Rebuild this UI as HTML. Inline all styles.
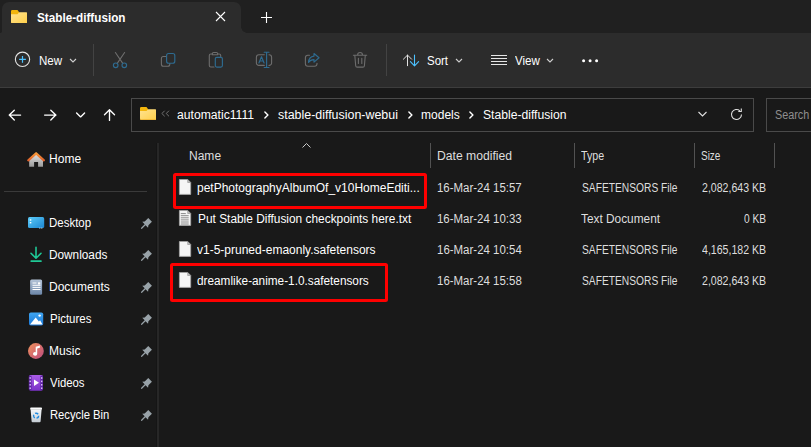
<!DOCTYPE html>
<html>
<head>
<meta charset="utf-8">
<title>Stable-diffusion</title>
<style>
*{box-sizing:border-box;margin:0;padding:0}
html,body{width:811px;height:447px;overflow:hidden;background:#191919}
body{font-family:"Liberation Sans",sans-serif;font-size:12px;color:#fff;position:relative}
.abs{position:absolute}
.t{position:absolute;white-space:nowrap;line-height:16px;height:16px;color:#fff;font-size:12px;transform-origin:0 50%}
#titlebar{left:0;top:0;width:811px;height:33px;background:#202020}
#tab{left:2px;top:2px;width:239px;height:31px;background:#2c2c2c;border-radius:7px 7px 0 0}
#tabcurveL{left:-6px;top:25px;width:8px;height:8px;background:radial-gradient(circle at 0 0,transparent 7.5px,#2c2c2c 8px)}
#tabcurveR{left:241px;top:27px;width:6px;height:6px;background:radial-gradient(circle at 100% 0,#202020 5.5px,#2c2c2c 6px)}
#toolbar{left:0;top:33px;width:811px;height:55px;background:#2c2c2c;border-bottom:1px solid #3d3d3d}
.vsep{position:absolute;width:1px;background:#434343}
#addr{left:131px;top:98px;width:623px;height:34px;border:1px solid #4a4a4a;background:#191919}
#search{left:766px;top:98px;width:60px;height:34px;border:1px solid #4a4a4a;background:#191919}
.colsep{position:absolute;top:143px;width:1px;height:25px;background:#525252}
.red{position:absolute;border:3.300px solid #fe0000;border-radius:2.500px}
.dim{color:#dedede}
/*FIT*/
#tabtitle{left:37.07px !important;right:auto !important;transform:scaleX(0.9759)}
#tnew{left:39.02px !important;right:auto !important;transform:scaleX(0.9620)}
#tsort{left:427.00px !important;right:auto !important;transform:scaleX(0.9564)}
#tview{left:515.00px !important;right:auto !important;transform:scaleX(0.9639)}
#bc1{left:176.99px !important;right:auto !important;transform:scaleX(1.0135)}
#bc2{left:278.00px !important;right:auto !important;transform:scaleX(1.0349)}
#bc3{left:420.98px !important;right:auto !important;transform:scaleX(1.0014)}
#bc4{left:483.01px !important;right:auto !important;transform:scaleX(1.0126)}
#sHome{left:48.95px !important;right:auto !important;transform:scaleX(1.0023)}
#s1{left:48.96px !important;right:auto !important;transform:scaleX(0.9558)}
#s2{left:49.00px !important;right:auto !important;transform:scaleX(0.9837)}
#s3{left:49.00px !important;right:auto !important;transform:scaleX(1.0007)}
#s4{left:50.00px !important;right:auto !important;transform:scaleX(0.9549)}
#s5{left:49.02px !important;right:auto !important;transform:scaleX(1.0021)}
#s6{left:49.99px !important;right:auto !important;transform:scaleX(0.9472)}
#s7{left:49.99px !important;right:auto !important;transform:scaleX(0.9371)}
#hName{left:188.99px !important;right:auto !important;transform:scaleX(1.0019)}
#hDate{left:436.96px !important;right:auto !important;transform:scaleX(1.0143)}
#hType{left:581.04px !important;right:auto !important;transform:scaleX(0.8886)}
#hSize{left:701.00px !important;right:auto !important;transform:scaleX(0.8306)}
#r1n{left:197.00px !important;right:auto !important;transform:scaleX(1.0000)}
#r2n{left:198.00px !important;right:auto !important;transform:scaleX(0.9908)}
#r3n{left:197.00px !important;right:auto !important;transform:scaleX(1.0001)}
#r4n{left:196.99px !important;right:auto !important;transform:scaleX(0.9829)}
#r1d{left:437.00px !important;right:auto !important;transform:scaleX(0.9552)}
#r2d{left:437.00px !important;right:auto !important;transform:scaleX(0.9552)}
#r3d{left:437.00px !important;right:auto !important;transform:scaleX(0.9553)}
#r4d{left:437.01px !important;right:auto !important;transform:scaleX(0.9553)}
#r1t{left:581.98px !important;right:auto !important;transform:scaleX(0.8530)}
#r2t{left:581.01px !important;right:auto !important;transform:scaleX(0.9879)}
#r3t{left:581.98px !important;right:auto !important;transform:scaleX(0.8530)}
#r4t{left:581.98px !important;right:auto !important;transform:scaleX(0.8530)}
#r1s{left:701.95px !important;right:auto !important;transform:scaleX(0.8810)}
#r2s{left:743.95px !important;right:auto !important;transform:scaleX(0.8489)}
#r3s{left:701.95px !important;right:auto !important;transform:scaleX(0.8810)}
#r4s{left:701.95px !important;right:auto !important;transform:scaleX(0.8810)}
/*ENDFIT*/
</style>
</head>
<body>
<!-- title bar -->
<div id="titlebar" class="abs"></div>
<div id="tab" class="abs"></div>
<div id="tabcurveR" class="abs"></div>
<div class="abs" style="left:0;top:30.500px;width:2px;height:2.500px;background:radial-gradient(circle at 0 0,#202020 1.900px,#2c2c2c 2.400px)"></div>
<div id="toolbar" class="abs"></div>

<!-- tab folder icon -->
<svg class="abs" style="left:10.8px;top:9.700px" width="16.400" height="13.600" viewBox="0 0 16.400 13.600">
  <defs><linearGradient id="fg" x1="0" y1="0" x2="1" y2="1"><stop offset="0" stop-color="#ffe391"/><stop offset="1" stop-color="#ffcf48"/></linearGradient></defs>
  <path d="M1.300 0h5.200l1.500 2h-8v-0.700a1.300 1.300 0 0 1 1.300-1.300z M0 2h8v3h-8z" fill="#f2b50c"/>
  <path d="M0 4.200h6.500l1.700-1.900h6.900a1.300 1.300 0 0 1 1.300 1.300v8.700a1.300 1.300 0 0 1-1.300 1.300h-13.800a1.300 1.300 0 0 1-1.300-1.300z" fill="url(#fg)"/>
  <path d="M0 12.300a1.300 1.300 0 0 0 1.300 1.300h13.800a1.300 1.300 0 0 0 1.300-1.300v-0.600a1.300 1.300 0 0 1-1.300 1.300h-13.800a1.300 1.300 0 0 1-1.300-1.300z" fill="#eeb232"/>
</svg>
<div class="t" id="tabtitle" style="left:37px;top:10px;font-weight:bold">Stable-diffusion</div>
<!-- close X -->
<svg class="abs" style="left:215px;top:11px" width="11" height="11" viewBox="0 0 11 11"><path d="M1 1l9 9M10 1l-9 9" stroke="#fff" stroke-width="1.1" fill="none"/></svg>
<!-- plus -->
<svg class="abs" style="left:261px;top:12px" width="11" height="11" viewBox="0 0 11 11"><path d="M5.5 0v11M0 5.5h11" stroke="#fff" stroke-width="1.1" fill="none"/></svg>

<!-- toolbar: New -->
<svg class="abs" style="left:14px;top:51px" width="17" height="17" viewBox="0 0 17 17">
  <circle cx="8.5" cy="8.3" r="7.15" stroke="#e4e4e4" stroke-width="1.1" fill="none"/>
  <path d="M8.5 4.9v6.800M5.100 8.3h6.800" stroke="#4cc2ff" stroke-width="1.2" fill="none"/>
</svg>
<div class="t" id="tnew" style="left:39px;top:53px;font-size:12px">New</div>
<svg class="abs" style="left:69px;top:58px" width="8" height="5" viewBox="0 0 8 5"><path d="M1 1l3 3 3-3" stroke="#cfcfcf" stroke-width="1.1" fill="none"/></svg>
<div class="vsep" style="left:93px;top:44px;height:32px"></div>

<!-- toolbar icons in page coordinates -->
<svg class="abs" style="left:0;top:0" width="811" height="100" viewBox="0 0 811 100" fill="none" stroke-linecap="round" stroke-linejoin="round">
  <g stroke="#6d6d6d" stroke-width="1.1">
    <!-- scissors blades -->
    <path d="M115.400 52.500l7.200 10.600M124.600 52.500l-7.200 10.600"/>
    <!-- copy back -->
    <path d="M166 56.500h-2.600a2 2 0 0 0-2 2v5.800a2 2 0 0 0 2 2h4.400a2 2 0 0 0 2-2v-0.800"/>
    <!-- paste clipboard -->
    <path d="M212.300 54h-1.500a1.500 1.500 0 0 0-1.500 1.500v10a1.500 1.500 0 0 0 1.500 1.500h3.200M217.700 54h1.500a1.500 1.500 0 0 1 1.500 1.500v1.200"/>
    <path d="M212.300 54.800v-1a1.300 1.300 0 0 1 1.300-1.300h2.800a1.300 1.300 0 0 1 1.300 1.300v1z"/>
    <!-- rename box -->
    <path d="M264.300 54.800h-5.400a2.500 2.500 0 0 0-2.500 2.500v5.600a2.500 2.500 0 0 0 2.500 2.500h5.400M269 54.800h0.100a2.500 2.500 0 0 1 2.500 2.500v5.600a2.500 2.500 0 0 1-2.500 2.500h-0.100"/>
    <!-- share box -->
    <path d="M309.500 55.200h-1.600a2.500 2.500 0 0 0-2.500 2.500v6.100a2.500 2.500 0 0 0 2.500 2.500h6.600a2.500 2.500 0 0 0 2.500-2.500v-0.600"/>
    <!-- trash -->
    <path d="M353.400 55.200h13.300M357.600 55a2.450 2.450 0 0 1 4.900 0M354.800 55.300l0.900 10.400a1.500 1.500 0 0 0 1.500 1.400h5.700a1.500 1.500 0 0 0 1.500-1.400l0.900-10.400M358.400 58.300v5.200M361.800 58.300v5.200"/>
  </g>
  <g stroke="#2e6b90" stroke-width="1.15">
    <circle cx="115.700" cy="65.300" r="2.300"/><circle cx="124.300" cy="65.300" r="2.300"/>
    <rect x="166.600" y="53.500" width="8.200" height="9.700" rx="2"/>
    <rect x="215.300" y="57.300" width="7.100" height="9.800" rx="1.500"/>
    <path d="M264.200 52.200h4.800M264.200 67.500h4.800M266.600 52.200v15.300"/>
    <path d="M258.900 63l2.600-6.300 2.600 6.300M259.800 61h3.400"/>
    <path d="M314 53.500l5 4.300-5 4.300v-2.500c-2.700 0-4.300 0.800-5.500 2.800 0.200-3.300 2.100-5.900 5.500-6.300z"/>
  </g>
</svg>
<div class="vsep" style="left:386px;top:44px;height:32px"></div>

<!-- sort -->
<svg class="abs" style="left:0;top:0" width="811" height="100" viewBox="0 0 811 100" fill="none" stroke-linecap="round" stroke-linejoin="round">
  <path d="M407.500 65.700v-10.600M403.400 59.200l4.100-4.100 4.100 4.100" stroke="#e2e2e2" stroke-width="1"/>
  <path d="M414.500 55v10.800M410.400 61.700l4.100 4.100 4.100-4.100" stroke="#4cc2ff" stroke-width="1.100"/>
  <path d="M491 55.500h16M491 58.500h16M491 61.500h16M491 64.500h16" stroke="#e6e6e6" stroke-width="1" stroke-linecap="butt"/>
  <circle cx="583.600" cy="60.700" r="1.500" fill="#fff"/><circle cx="590.100" cy="60.700" r="1.500" fill="#fff"/><circle cx="596.600" cy="60.700" r="1.500" fill="#fff"/>
</svg>
<div class="t" id="tsort" style="left:427px;top:53px;font-size:12px">Sort</div>
<svg class="abs" style="left:455px;top:58px" width="8" height="5" viewBox="0 0 8 5"><path d="M1 1l3 3 3-3" stroke="#cfcfcf" stroke-width="1.100" fill="none"/></svg>
<!-- view -->
<div class="t" id="tview" style="left:515px;top:53px;font-size:12px">View</div>
<svg class="abs" style="left:546px;top:58px" width="8" height="5" viewBox="0 0 8 5"><path d="M1 1l3 3 3-3" stroke="#cfcfcf" stroke-width="1.100" fill="none"/></svg>
<!-- nav row -->
<svg class="abs" style="left:0;top:88px" width="130" height="52" viewBox="0 88 130 52" fill="none" stroke="#fff" stroke-width="1.350" stroke-linecap="round" stroke-linejoin="round">
  <path d="M20.600 115.100h-11.400M14.300 110.200l-5 4.900 5 4.900"/>
  <path d="M44.600 115.100h11.400M50.800 110.200l5 4.900-5 4.900"/>
  <path d="M76.600 112.900l4 4 4-4"/>
  <path d="M109.500 120.400v-10.700M104.500 114.700l5-5 5 5"/>
</svg>
<div id="addr" class="abs"></div>
<svg class="abs" style="left:139.800px;top:107.300px" width="16.400" height="12.900" viewBox="0 0 16.400 13.600" preserveAspectRatio="none">
  <path d="M1.300 0h5.200l1.500 2h-8v-0.700a1.300 1.300 0 0 1 1.300-1.300z M0 2h8v3h-8z" fill="#f2b50c"/>
  <path d="M0 4.200h6.500l1.700-1.900h6.900a1.300 1.300 0 0 1 1.300 1.300v8.700a1.300 1.300 0 0 1-1.300 1.300h-13.800a1.300 1.300 0 0 1-1.300-1.300z" fill="url(#fg)"/>
  <path d="M0 12.300a1.300 1.300 0 0 0 1.300 1.300h13.800a1.300 1.300 0 0 0 1.300-1.300v-0.600a1.300 1.300 0 0 1-1.300 1.300h-13.800a1.300 1.300 0 0 1-1.300-1.300z" fill="#eeb232"/>
</svg>
<svg class="abs" style="left:160px;top:109px" width="11" height="9" viewBox="160 109 11 9" fill="none" stroke="#727272" stroke-width="1" stroke-linecap="round" stroke-linejoin="round"><path d="M164.400 111l-2.500 2.500 2.500 2.500M168.700 111l-2.500 2.500 2.500 2.500"/></svg>
<div class="t" id="bc1" style="left:177px;top:107px">automatic1111</div>
<svg class="abs bcarrow" style="left:264px;top:111px" width="5" height="8" viewBox="0 0 5 8" fill="none"><path d="M0.900 1l3 3-3 3" stroke="#fff" stroke-width="1.400" stroke-linecap="round" stroke-linejoin="round"/></svg>
<div class="t" id="bc2" style="left:278px;top:107px">stable-diffusion-webui</div>
<svg class="abs bcarrow" style="left:408px;top:111px" width="5" height="8" viewBox="0 0 5 8" fill="none"><path d="M0.900 1l3 3-3 3" stroke="#fff" stroke-width="1.400" stroke-linecap="round" stroke-linejoin="round"/></svg>
<div class="t" id="bc3" style="left:421px;top:107px">models</div>
<svg class="abs bcarrow" style="left:469px;top:111px" width="5" height="8" viewBox="0 0 5 8" fill="none"><path d="M0.900 1l3 3-3 3" stroke="#fff" stroke-width="1.400" stroke-linecap="round" stroke-linejoin="round"/></svg>
<div class="t" id="bc4" style="left:483px;top:107px">Stable-diffusion</div>
<svg class="abs" style="left:698.400px;top:111.300px" width="9" height="6" viewBox="0 0 9 6" fill="none"><path d="M0.500 1l4 4 4-4" stroke="#e0e0e0" stroke-width="1.100"/></svg>
<svg class="abs" style="left:730px;top:108px" width="13" height="13" viewBox="0 0 13 13" fill="none"><path d="M11.500 6.500a5 5 0 1 1-1.600-3.700" stroke="#e0e0e0" stroke-width="1.100"/><path d="M11.300 0.500v3h-3" stroke="#e0e0e0" stroke-width="1.100"/></svg>
<div id="search" class="abs"></div>
<div class="t" id="tsearch" style="left:775px;top:107px;color:#8f8f8f;transform:scaleX(0.9)">Search</div>

<!-- sidebar -->
<div class="abs" style="left:156px;top:143px;width:1px;height:304px;background:#151515"></div><div class="abs" style="left:157px;top:143px;width:2px;height:304px;background:#272727"></div>
<div class="abs" style="left:4px;top:191px;width:143px;height:1px;background:#3a3a3a"></div>

<svg class="abs" style="left:0;top:140px" width="157" height="307" viewBox="0 140 157 307">
<defs>
<linearGradient id="gHome" x1="0" y1="0" x2="0" y2="1"><stop offset="0" stop-color="#e6e6e6"/><stop offset="1" stop-color="#9a9a9a"/></linearGradient>
<linearGradient id="gRoof" x1="0" y1="0" x2="0" y2="1"><stop offset="0" stop-color="#f79a3a"/><stop offset="1" stop-color="#e0602a"/></linearGradient>
<linearGradient id="gDesk" x1="0" y1="0" x2="1" y2="1"><stop offset="0" stop-color="#5ccbf8"/><stop offset="1" stop-color="#1b86d2"/></linearGradient>
<linearGradient id="gDoc" x1="0" y1="0" x2="0" y2="1"><stop offset="0" stop-color="#b4c4d8"/><stop offset="1" stop-color="#6c86a8"/></linearGradient>
<linearGradient id="gPic" x1="0" y1="0" x2="0" y2="1"><stop offset="0" stop-color="#3fa6f2"/><stop offset="1" stop-color="#1a76d6"/></linearGradient>
<linearGradient id="gMus" x1="0" y1="0" x2="1" y2="1"><stop offset="0" stop-color="#f0935a"/><stop offset="1" stop-color="#bd4a80"/></linearGradient>
<linearGradient id="gVid" x1="0" y1="0" x2="0" y2="1"><stop offset="0" stop-color="#aa5ce6"/><stop offset="1" stop-color="#7a32c8"/></linearGradient>
<linearGradient id="gBin" x1="0" y1="0" x2="0" y2="1"><stop offset="0" stop-color="#f4f6f8"/><stop offset="1" stop-color="#c4ccd4"/></linearGradient>
</defs>
<!-- home -->
<path d="M29.200 159.200l6.900-6 6.900 6v7.500h-4.900v-4.600h-4v4.600h-4.900z" fill="url(#gHome)"/>
<path d="M28.300 160.300l7.800-7 7.800 7" fill="none" stroke="url(#gRoof)" stroke-width="2.300" stroke-linecap="round" stroke-linejoin="round"/>
<!-- desktop -->
<rect x="28" y="217.100" width="16.200" height="11" rx="1.600" fill="url(#gDesk)"/>
<rect x="29.800" y="219.300" width="1.500" height="1.400" fill="#fff"/><rect x="29.800" y="222" width="1.500" height="1.400" fill="#fff"/>
<rect x="39.300" y="227.600" width="1" height="1" fill="#d6f0ff"/><rect x="41.300" y="227.600" width="1" height="1" fill="#d6f0ff"/>
<!-- downloads -->
<path d="M36 247.300v10M31 253.300l5 4.900 5-4.900" fill="none" stroke="#1fc795" stroke-width="1.600" stroke-linecap="round" stroke-linejoin="round"/>
<rect x="30.500" y="260.200" width="11.200" height="1.800" rx="0.500" fill="#1fc795"/>
<!-- documents -->
<rect x="30.100" y="279.400" width="12" height="15.400" rx="1.500" fill="url(#gDoc)"/>
<path d="M32.500 283h4M32.500 285.300h8M32.500 287.400h8M32.500 289.500h8" stroke="#fff" stroke-width="1"/>
<rect x="37.900" y="282.300" width="2.400" height="2.200" fill="#fff"/>
<!-- pictures -->
<rect x="29" y="312.500" width="14.200" height="13.100" rx="1.800" fill="url(#gPic)"/>
<path d="M30 324.600l5.700-7 3.200 3.800 1.200-1.200 2.400 4.400z" fill="#fff"/>
<circle cx="39.600" cy="315.600" r="1.200" fill="#fff"/>
<!-- music -->
<circle cx="35.900" cy="351" r="7.900" fill="url(#gMus)"/>
<path d="M35.700 346.700l4.200-1.200v2.300l-2.700 0.800v5.300a2.100 1.800 0 1 1-1.500-1.700z" fill="#fff"/>
<!-- videos -->
<rect x="28.900" y="375" width="14.100" height="15.700" rx="1.800" fill="url(#gVid)"/>
<rect x="28.900" y="375.800" width="2.600" height="14.100" fill="#5a22a0"/><rect x="40.400" y="375.800" width="2.600" height="14.100" fill="#5a22a0"/>
<g fill="#d9b8f8"><rect x="29.500" y="377.200" width="1.400" height="1.600"/><rect x="29.500" y="380.600" width="1.400" height="1.600"/><rect x="29.500" y="384" width="1.400" height="1.600"/><rect x="29.500" y="387.400" width="1.400" height="1.600"/>
<rect x="41" y="377.200" width="1.400" height="1.600"/><rect x="41" y="380.600" width="1.400" height="1.600"/><rect x="41" y="384" width="1.400" height="1.600"/><rect x="41" y="387.400" width="1.400" height="1.600"/></g>
<path d="M34 379.600l5 3.200-5 3.200z" fill="#fff"/>
<!-- recycle bin -->
<path d="M30.600 409.500h11l-1 11.700a1 1 0 0 1-1 1h-7a1 1 0 0 1-1-1z" fill="url(#gBin)"/>
<rect x="30.200" y="407.400" width="11.800" height="2.300" rx="0.800" fill="#fafbfc"/>
<circle cx="36.100" cy="415.700" r="2.500" fill="none" stroke="#1e8ae0" stroke-width="1.400" stroke-dasharray="3.400 1.800"/>
<!-- pins -->
<g fill="#98a2a8">
<g transform="translate(145.500 224.4) rotate(45)"><path d="M-2.600 -6.500h5.200v5l1.500 2h-3.500v5l-0.600 0.900-0.600-0.900v-5h-3.500l1.500-2z"/></g>
<g transform="translate(145.500 256.4) rotate(45)"><path d="M-2.600 -6.500h5.200v5l1.500 2h-3.500v5l-0.600 0.900-0.600-0.900v-5h-3.500l1.500-2z"/></g>
<g transform="translate(145.500 288.4) rotate(45)"><path d="M-2.600 -6.500h5.200v5l1.500 2h-3.500v5l-0.600 0.900-0.600-0.900v-5h-3.500l1.500-2z"/></g>
<g transform="translate(145.500 320.4) rotate(45)"><path d="M-2.600 -6.500h5.200v5l1.500 2h-3.500v5l-0.600 0.900-0.600-0.900v-5h-3.500l1.500-2z"/></g>
<g transform="translate(145.500 352.4) rotate(45)"><path d="M-2.600 -6.500h5.200v5l1.500 2h-3.500v5l-0.600 0.900-0.600-0.900v-5h-3.500l1.500-2z"/></g>
<g transform="translate(145.500 384.4) rotate(45)"><path d="M-2.600 -6.500h5.200v5l1.500 2h-3.500v5l-0.600 0.900-0.600-0.900v-5h-3.500l1.500-2z"/></g>
<g transform="translate(145.500 416.4) rotate(45)"><path d="M-2.600 -6.500h5.200v5l1.500 2h-3.500v5l-0.600 0.900-0.600-0.900v-5h-3.500l1.500-2z"/></g>
</g>
</svg>
<div class="t side" id="sHome" style="left:49px;top:151px">Home</div>
<div class="t side" id="s1" style="left:49px;top:215px">Desktop</div>
<div class="t side" id="s2" style="left:49px;top:247px">Downloads</div>
<div class="t side" id="s3" style="left:49px;top:279px">Documents</div>
<div class="t side" id="s4" style="left:49px;top:311px">Pictures</div>
<div class="t side" id="s5" style="left:49px;top:343px">Music</div>
<div class="t side" id="s6" style="left:49px;top:375px">Videos</div>
<div class="t side" id="s7" style="left:49px;top:407px">Recycle Bin</div>

<!-- header -->
<svg class="abs" style="left:302px;top:143px" width="9" height="5" viewBox="0 0 9 5" fill="none"><path d="M0.500 4.500l4-4 4 4" stroke="#c8c8c8" stroke-width="1"/></svg>
<div class="t dim" id="hName" style="left:189px;top:148px">Name</div>
<div class="t dim" id="hDate" style="left:437px;top:148px">Date modified</div>
<div class="t dim" id="hType" style="left:581px;top:148px">Type</div>
<div class="t dim" id="hSize" style="left:701px;top:148px">Size</div>
<div class="colsep" style="left:430px"></div>
<div class="colsep" style="left:574px"></div>
<div class="colsep" style="left:694px"></div>
<div class="colsep" style="left:774px"></div>

<!-- rows -->
<div class="t" id="r1n" style="left:197px;top:180px">petPhotographyAlbumOf_v10HomeEditi...</div>
<div class="t dim" id="r1d" style="left:437px;top:180px">16-Mar-24 15:57</div>
<div class="t dim" id="r1t" style="left:581px;top:180px">SAFETENSORS File</div>
<div class="t dim" id="r1s" style="left:700px;top:180px">2,082,643 KB</div>
<div class="t" id="r2n" style="left:197px;top:211px">Put Stable Diffusion checkpoints here.txt</div>
<div class="t dim" id="r2d" style="left:437px;top:211px">16-Mar-24 10:33</div>
<div class="t dim" id="r2t" style="left:581px;top:211px">Text Document</div>
<div class="t dim" id="r2s" style="left:700px;top:211px">0 KB</div>
<div class="t" id="r3n" style="left:197px;top:242px">v1-5-pruned-emaonly.safetensors</div>
<div class="t dim" id="r3d" style="left:437px;top:242px">16-Mar-24 10:54</div>
<div class="t dim" id="r3t" style="left:581px;top:242px">SAFETENSORS File</div>
<div class="t dim" id="r3s" style="left:700px;top:242px">4,165,182 KB</div>
<div class="t" id="r4n" style="left:197px;top:273px">dreamlike-anime-1.0.safetensors</div>
<div class="t dim" id="r4d" style="left:437px;top:273px">16-Mar-24 15:58</div>
<div class="t dim" id="r4t" style="left:581px;top:273px">SAFETENSORS File</div>
<div class="t dim" id="r4s" style="left:700px;top:273px">2,082,643 KB</div>

<!-- file icons -->
<svg class="abs" style="left:170px;top:170px" width="30" height="130" viewBox="170 170 30 130">
<defs><g id="fi"><path d="M0.400 0.400h8.300l3 3v11.900h-11.300z" fill="#f5f5f5" stroke="#a6a6a6" stroke-width="0.800"/><path d="M8.700 0.400v3h3z" fill="#c4c4c4" stroke="#8a8a8a" stroke-width="0.600"/></g></defs>
<use href="#fi" x="179" y="179.100"/>
<use href="#fi" x="179" y="210.100"/>
<path d="M180.800 213.600h5M180.800 215.700h7.900M180.800 217.800h7.900M180.800 219.900h7.900M180.800 222h7.900M180.800 224h7.900" stroke="#8a8a8a" stroke-width="1"/>
<use href="#fi" x="179" y="241.100"/>
<use href="#fi" x="179" y="272.100"/>
</svg>

<!-- red annotation boxes -->
<div class="red" style="left:173px;top:172.700px;width:254px;height:36.200px"></div>
<div class="red" style="left:169.800px;top:263.200px;width:218.700px;height:38.600px"></div>
</body>
</html>
